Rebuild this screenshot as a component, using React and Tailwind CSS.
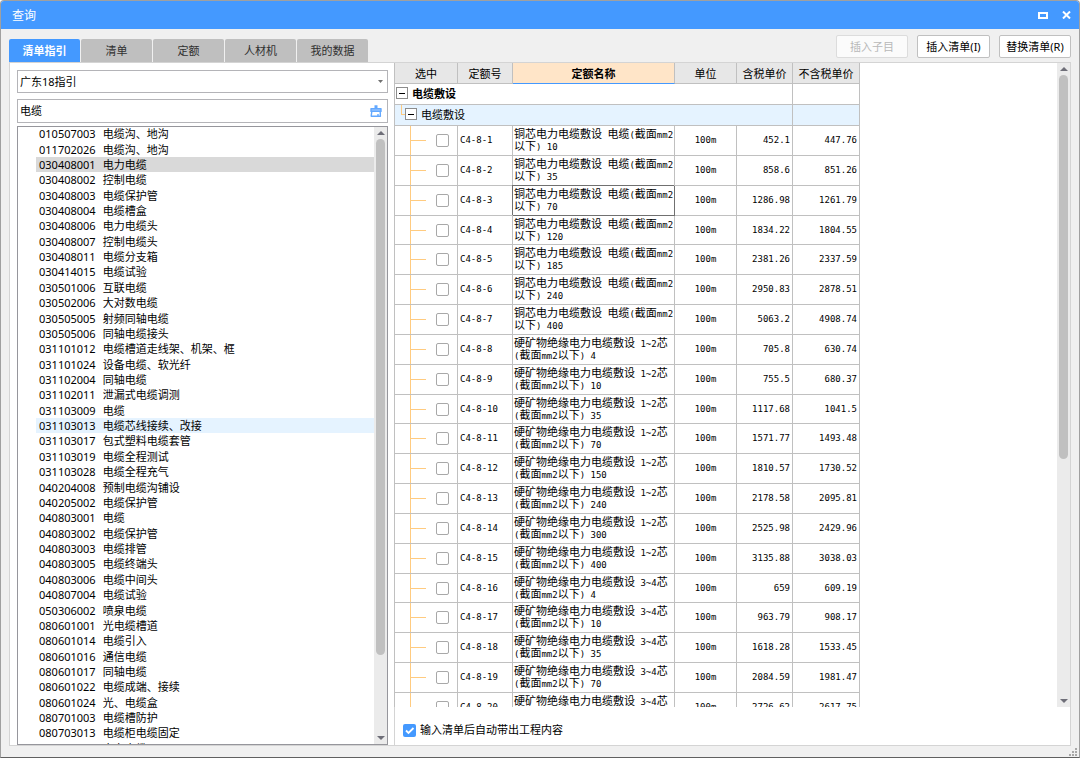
import React from "react";

const tabs = ["清单指引", "清单", "定额", "人材机", "我的数据"];

const items = [
  ["010507003", "电缆沟、地沟"],
  ["011702026", "电缆沟、地沟"],
  ["030408001", "电力电缆"],
  ["030408002", "控制电缆"],
  ["030408003", "电缆保护管"],
  ["030408004", "电缆槽盒"],
  ["030408006", "电力电缆头"],
  ["030408007", "控制电缆头"],
  ["030408011", "电缆分支箱"],
  ["030414015", "电缆试验"],
  ["030501006", "互联电缆"],
  ["030502006", "大对数电缆"],
  ["030505005", "射频同轴电缆"],
  ["030505006", "同轴电缆接头"],
  ["031101012", "电缆槽道走线架、机架、框"],
  ["031101024", "设备电缆、软光纤"],
  ["031102004", "同轴电缆"],
  ["031102011", "泄漏式电缆调测"],
  ["031103009", "电缆"],
  ["031103013", "电缆芯线接续、改接"],
  ["031103017", "包式塑料电缆套管"],
  ["031103019", "电缆全程测试"],
  ["031103028", "电缆全程充气"],
  ["040204008", "预制电缆沟铺设"],
  ["040205002", "电缆保护管"],
  ["040803001", "电缆"],
  ["040803002", "电缆保护管"],
  ["040803003", "电缆排管"],
  ["040803005", "电缆终端头"],
  ["040803006", "电缆中间头"],
  ["040807004", "电缆试验"],
  ["050306002", "喷泉电缆"],
  ["080601001", "光电缆槽道"],
  ["080601014", "电缆引入"],
  ["080601016", "通信电缆"],
  ["080601017", "同轴电缆"],
  ["080601022", "电缆成端、接续"],
  ["080601024", "光、电缆盒"],
  ["080701003", "电缆槽防护"],
  ["080703013", "电缆柜电缆固定"],
  ["080801001", "电力电缆"],
];

const copper = "铜芯电力电缆敷设 电缆(截面mm2\n以下) ";
const mineral12 = "硬矿物绝缘电力电缆敷设 1~2芯\n(截面mm2以下) ";
const mineral34 = "硬矿物绝缘电力电缆敷设 3~4芯\n(截面mm2以下) ";

const rows = [
  [copper + "10", "452.1", "447.76"],
  [copper + "35", "858.6", "851.26"],
  [copper + "70", "1286.98", "1261.79"],
  [copper + "120", "1834.22", "1804.55"],
  [copper + "185", "2381.26", "2337.59"],
  [copper + "240", "2950.83", "2878.51"],
  [copper + "400", "5063.2", "4908.74"],
  [mineral12 + "4", "705.8", "630.74"],
  [mineral12 + "10", "755.5", "680.37"],
  [mineral12 + "35", "1117.68", "1041.5"],
  [mineral12 + "70", "1571.77", "1493.48"],
  [mineral12 + "150", "1810.57", "1730.52"],
  [mineral12 + "240", "2178.58", "2095.81"],
  [mineral12 + "300", "2525.98", "2429.96"],
  [mineral12 + "400", "3135.88", "3038.03"],
  [mineral34 + "4", "659", "609.19"],
  [mineral34 + "10", "963.79", "908.17"],
  [mineral34 + "35", "1618.28", "1533.45"],
  [mineral34 + "70", "2084.59", "1981.47"],
  [mineral34 + "120", "2726.62", "2617.75"],
];

const edge = "border-r border-b p-0 ";
const cell = edge + "border-[#c0c0c0]";
const mono = "font-['DejaVu_Sans_Mono','Noto_Sans_CJK_SC',monospace] text-[9px] leading-none";

function MixedText({ text }) {
  return text.split("\n").map((line, n) => (
    <div key={n} className="h-3 leading-3 whitespace-pre">
      {line.split(/([\x20-\x7e]+)/).map((part, i) =>
        i % 2 ? (
          <span key={i} className={mono}>{part}</span>
        ) : (
          part
        )
      )}
    </div>
  ));
}

function Scrollbar({ thumb }) {
  return (
    <div className="flex w-[13px] shrink-0 flex-col items-center bg-[#ebebeb] py-1" aria-hidden="true">
      <svg className="h-1 w-2" viewBox="0 0 8 4"><path d="M4 0 8 4H0z" fill="#6e6e78" /></svg>
      <div className="flex w-[9px] flex-1 flex-col pt-1">
        <div className={"rounded-full bg-[#c0c0c0] " + thumb} />
      </div>
      <svg className="h-1 w-2" viewBox="0 0 8 4"><path d="M0 0H8L4 4z" fill="#6e6e78" /></svg>
    </div>
  );
}

function Toggle({ label }) {
  return (
    <button type="button" aria-label={label} className="flex size-3 shrink-0 items-center justify-center border border-[#8c8c8c] bg-white">
      <span className="h-px w-1.5 bg-black" />
    </button>
  );
}

function TreeCell({ code, last }) {
  return (
    <div className="flex h-full items-center pl-[15px]">
      <div className="flex h-full w-4 flex-col">
        <div className="flex-1 border-b border-l border-[#ffcb80]" />
        <div className={"flex-1 " + (last ? "" : "border-l border-[#ffcb80]")} />
      </div>
      <input
        type="checkbox"
        aria-label={code}
        className="ml-2.5 size-[13px] appearance-none rounded-xs border border-[#a8a8a8] bg-white"
      />
    </div>
  );
}

export default function App() {
  return (
    <div className="flex h-screen flex-col overflow-hidden rounded-t-sm border border-[#a0a0a0] border-b-[#606060] bg-[#f0f0f0] font-['Noto_Sans','Noto_Sans_CJK_SC',sans-serif] text-[11px] leading-4 text-black">
      <header className="flex h-7 shrink-0 items-center justify-between bg-[#4499ff] pr-2 pl-[11px] text-white">
        <h1 className="pt-0.5 text-xs">查询</h1>
        <div className="flex items-center gap-3.5">
          <button type="button" aria-label="最大化">
            <svg className="h-[7px] w-2.5" viewBox="0 0 10 7"><path d="M1 1H9V6H1z" fill="none" stroke="#fff" strokeWidth="2" /></svg>
          </button>
          <button type="button" aria-label="关闭">
            <svg className="h-2 w-[9px]" viewBox="0 0 9 8"><path d="M1 .5 8 7.5M8 .5 1 7.5" stroke="#fff" strokeWidth="2" /></svg>
          </button>
        </div>
      </header>

      <div className="flex h-[33px] shrink-0 items-end justify-between px-2">
        <nav className="flex gap-px">
          {tabs.map((tab, i) => (
            <button
              key={tab}
              type="button"
              className={
                "h-[23px] w-[71px] rounded-t-xs " +
                (i === 0 ? "bg-[#4499ff] font-bold text-white" : "bg-[#bfbfbf] text-[#303030]")
              }
            >
              {tab}
            </button>
          ))}
        </nav>
        <div className="flex gap-[9px] pb-1">
          <button type="button" disabled className="h-[23px] w-[72px] rounded-xs border border-[#dcdcdc] bg-[#fbfbfb] text-[#b8b8b8]">插入子目</button>
          <button type="button" className="h-[23px] w-[73px] rounded-xs border border-[#c0c0c0] bg-white">插入清单(I)</button>
          <button type="button" className="h-[23px] w-[72px] rounded-xs border border-[#c0c0c0] bg-white">替换清单(R)</button>
        </div>
      </div>

      <main className="mx-2 flex min-h-0 flex-1 border border-[#d4d4d4] bg-white">
        <aside className="flex w-[385px] shrink-0 flex-col border-r border-[#d4d4d4] pt-[7px] pr-[6px] pl-[7px]">
          <div className="relative flex">
            <select aria-label="指引" className="h-[23px] w-full appearance-none border border-[#b4b4b8] bg-white px-0.5">
              <option>广东18指引</option>
            </select>
            <svg className="pointer-events-none absolute top-2.5 right-[5px] h-[3px] w-[5px]" viewBox="0 0 5 3"><path d="M0 0H5L2.5 3z" fill="#707070" /></svg>
          </div>
          <div className="mt-1.5 flex h-6 items-center border border-[#b4b4b8] pr-[5px]">
            <input type="text" aria-label="搜索" defaultValue="电缆" className="min-w-0 flex-1 px-0.5 outline-none" />
            <button type="button" aria-label="清除">
              <svg className="size-3" viewBox="0 0 12 12" fill="none" stroke="#62a8ff" strokeWidth="1.4" strokeLinejoin="round">
                <path d="M1 3.6H11V6.4H1z" fill="#8fc1ff" />
                <path d="M1.8 6.4 1.2 11.2H10.4L10.2 6.4M8 9V11" />
                <path d="M6 .2V4" strokeWidth="3" />
              </svg>
            </button>
          </div>
          <div className="mt-[3px] flex min-h-0 flex-1 border border-[#96969c]">
            <div className="min-w-0 flex-1 overflow-hidden pl-[18px]">
              <ul className="-mt-px grid h-[630px] auto-rows-fr">
                {items.map(([code, name], i) => (
                  <li
                    key={code}
                    className={
                      "flex min-h-0 items-center gap-[7px] pl-[3px] leading-[15px] " +
                      (i === 2 ? "bg-[#d9d9d9]" : i === 19 ? "bg-[#e5f3ff]" : "")
                    }
                  >
                    <span>{code}</span>
                    <span>{name}</span>
                  </li>
                ))}
              </ul>
            </div>
            <Scrollbar thumb="h-[516px]" />
          </div>
        </aside>

        <section className="-ml-px flex min-w-0 flex-1 flex-col">
          <div className="flex min-h-0 flex-1">
            <div className="min-w-0 flex-1 overflow-hidden">
              <table className="w-[466px] table-fixed border-separate border-spacing-0 border-l border-[#c0c0c0] font-['Noto_Sans_CJK_SC',sans-serif] leading-[13px]">
                <colgroup>
                  <col className="w-[63px]" />
                  <col className="w-[55px]" />
                  <col className="w-[162px]" />
                  <col className="w-[62px]" />
                  <col className="w-14" />
                  <col className="w-[67px]" />
                </colgroup>
                <thead>
                  <tr className="h-[21px] bg-[#e7e7e7]">
                    <th className={cell + " font-normal"}>选中</th>
                    <th className={cell + " font-normal"}>定额号</th>
                    <th className={edge + "border-r-[#c0c0c0] border-b-[#4499ff] bg-[#ffe5c8] font-bold"}>定额名称</th>
                    <th className={cell + " font-normal"}>单位</th>
                    <th className={cell + " font-normal"}>含税单价</th>
                    <th className={cell + " font-normal"}>不含税单价</th>
                  </tr>
                </thead>
                <tbody>
                  <tr className="h-[21px] font-bold">
                    <td className={cell + " pb-0.5"} colSpan={5}>
                      <div className="flex items-center gap-1 pl-px"><Toggle label="折叠" />电缆敷设</div>
                    </td>
                    <td className={cell} />
                  </tr>
                  <tr className="h-[21px] bg-[#e5f3ff]">
                    <td className={cell + " pb-0.5"} colSpan={5}>
                      <div className="flex h-[18px] items-stretch pl-1.5">
                        <div className="h-2.5 w-1 border-b border-l border-[#ffcb80]" />
                        <div className="flex items-center gap-1"><Toggle label="折叠" />电缆敷设</div>
                      </div>
                    </td>
                    <td className={cell} />
                  </tr>
                  {rows.map(([name, taxed, untaxed], i) => {
                    const code = "C4-8-" + (i + 1);
                    return (
                      <tr key={code} className="h-[30px] nth-[6n]:h-[29px]">
                        <td className={cell + " h-px"}><TreeCell code={code} last={i === rows.length - 1} /></td>
                        <td className={cell + " pl-0.5 " + mono}>{code}</td>
                        <td
                          className={
                            edge + "pb-[3px] pl-px " +
                            (i === 2 ? "border-[#707070] shadow-[-1px_-1px_0_#707070]" : "border-[#c0c0c0]")
                          }
                        >
                          <MixedText text={name} />
                        </td>
                        <td className={cell + " text-center " + mono}>100m</td>
                        <td className={cell + " pr-0.5 text-right " + mono}>{taxed}</td>
                        <td className={cell + " pr-0.5 text-right " + mono}>{untaxed}</td>
                      </tr>
                    );
                  })}
                </tbody>
              </table>
            </div>
            <Scrollbar thumb="h-[384px]" />
          </div>
          <label className="flex h-[38px] shrink-0 items-center gap-1 pt-2 pl-[9px]">
            <span className="relative flex">
              <input type="checkbox" defaultChecked className="size-[13px] appearance-none rounded-xs bg-[#4499ff]" />
              <svg className="pointer-events-none absolute inset-0 size-[13px]" viewBox="0 0 13 13"><path d="M3 6.5 5.5 9 10.5 4" fill="none" stroke="#fff" strokeWidth="1.8" /></svg>
            </span>
            输入清单后自动带出工程内容
          </label>
        </section>
      </main>

      <footer className="flex h-[11px] shrink-0 items-center justify-end pr-0.5">
        <svg className="h-2 w-2" viewBox="0 0 8 8" fill="#a8a8a8">
          <path d="M6 0H8V2H6zM3 3H5V5H3zM6 3H8V5H6zM0 6H2V8H0zM3 6H5V8H3zM6 6H8V8H6z" />
        </svg>
      </footer>
    </div>
  );
}
